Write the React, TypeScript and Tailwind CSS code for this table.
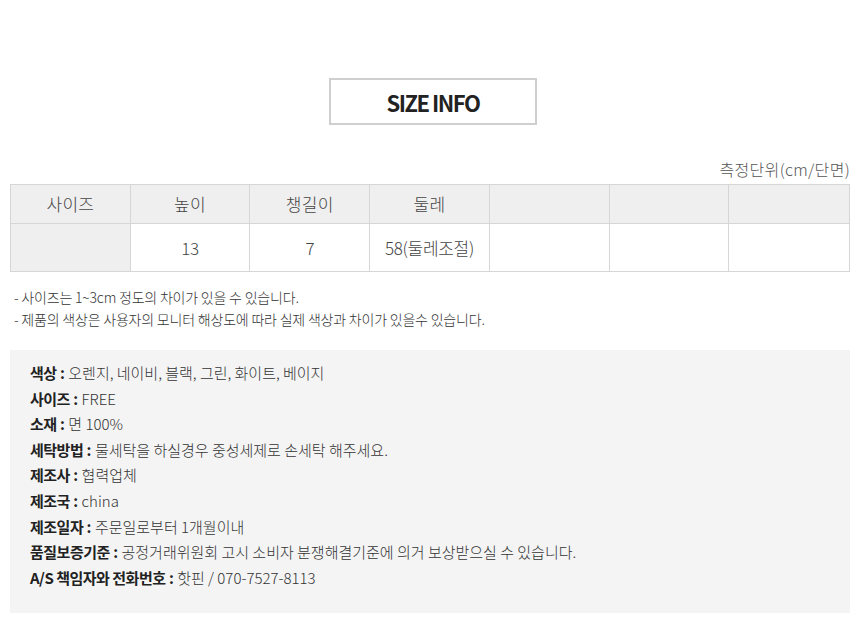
import React from "react";

const font = { fontFamily: '"Noto Sans CJK KR", "Noto Sans", sans-serif' };

const headers = ["사이즈", "높이", "챙길이", "둘레", "", "", ""];
const values = ["", "13", "7", "58(둘레조절)", "", "", ""];

const info: [string, string][] = [
  ["색상", "오렌지, 네이비, 블랙, 그린,  화이트, 베이지"],
  ["사이즈", "FREE"],
  ["소재", "면 100%"],
  ["세탁방법", "물세탁을 하실경우  중성세제로 손세탁 해주세요."],
  ["제조사", "협력업체"],
  ["제조국", "china"],
  ["제조일자", "주문일로부터 1개월이내"],
  ["품질보증기준", "공정거래위원회 고시 소비자 분쟁해결기준에 의거 보상받으실 수 있습니다."],
  ["A/S 책임자와 전화번호", "핫핀 / 070-7527-8113"],
];

export default function App() {
  return (
    <div className="w-[860px] h-[644px] bg-white text-[#333]" style={font}>
      <div className="pt-[78px] pl-[6px] flex justify-center">
        <div className="w-[208px] h-[47px] border-2 border-[#cfcfcf] flex items-center justify-center">
          <span className="text-[22px] font-bold tracking-[-1.5px] text-[#222] leading-none">SIZE INFO</span>
        </div>
      </div>
      <div className="px-[10px]">
        <div className="mt-[34px] text-right text-[16px] font-light text-[#555] tracking-[0.3px] leading-[20px]">
          측정단위(cm/단면)
        </div>
        <div className="mt-[5px] grid grid-cols-7 border border-[#d6d6d6] w-[840px]">
          {headers.map((h, i) => (
            <div
              key={"h" + i}
              className={`h-[39px] bg-[#efefef] border-b border-[#d6d6d6] flex items-center justify-center text-[17px] font-light text-[#444] tracking-[0.3px] ${i < 6 ? "border-r" : ""}`}
            >
              {h}
            </div>
          ))}
          {values.map((v, i) => (
            <div
              key={"v" + i}
              className={`h-[47px] flex items-center justify-center text-[17px] font-light text-[#444] tracking-[-0.3px] ${i === 0 ? "bg-[#efefef]" : "bg-white"} ${i < 6 ? "border-r border-[#d6d6d6]" : ""}`}
            >
              {v}
            </div>
          ))}
        </div>
        <div className="mt-[14px] pl-[4px] text-[14px] font-light text-[#333] tracking-[-0.2px] leading-[22px]">
          <div>- 사이즈는 1~3cm 정도의 차이가 있을 수 있습니다.</div>
          <div>- 제품의 색상은 사용자의 모니터 해상도에 따라 실제 색상과 차이가 있을수 있습니다.</div>
        </div>
        <div className="mt-[20px] h-[263px] bg-[#f4f4f4] pl-[20px] pt-[10px] text-[15px] text-[#333] tracking-[0px] leading-[25.6px]">
          {info.map(([k, v]) => (
            <div key={k}>
              <span className="font-bold text-[#222] tracking-[-0.5px]">{k}</span>
              <span className="font-bold text-[#222]"> : </span>
              <span className="font-light">{v}</span>
            </div>
          ))}
        </div>
      </div>
    </div>
  );
}
